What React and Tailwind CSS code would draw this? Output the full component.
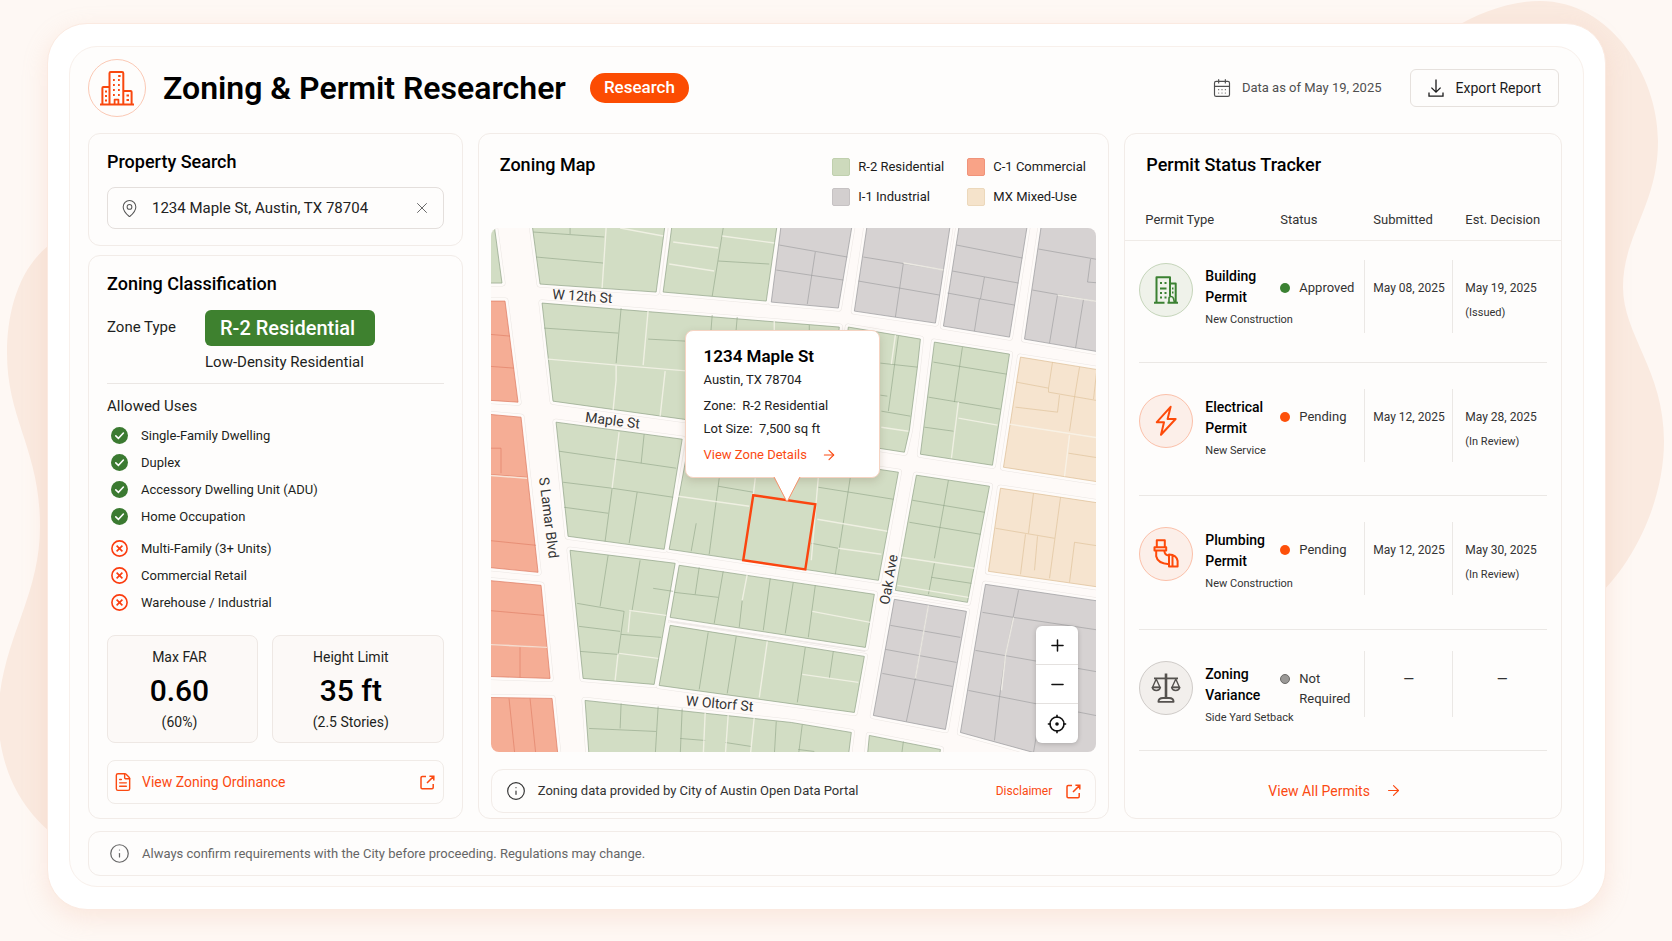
import React, { useState } from "react"
import { ArrowRight, CalendarDays, FileText, Info, MapPin, Minus, Plus, X } from "lucide-react"

const allowedUses = [
  "Single-Family Dwelling",
  "Duplex",
  "Accessory Dwelling Unit (ADU)",
  "Home Occupation",
]

const prohibitedUses = ["Multi-Family (3+ Units)", "Commercial Retail", "Warehouse / Industrial"]

const legend = [
  { label: "R-2 Residential", swatch: "bg-[#cddabc] border-[#c0d0ae]" },
  { label: "C-1 Commercial", swatch: "bg-[#f9a387] border-[#f0937a]" },
  { label: "I-1 Industrial", swatch: "bg-[#d3cfcf] border-[#c6c2c3]" },
  { label: "MX Mixed-Use", swatch: "bg-[#f5e3cb] border-[#ecd8bb]" },
]

const zones = {
  r2: { fill: "#d2ddc4", line: "#8fa287" },
  c1: { fill: "#f5ad95", line: "#dd7a62" },
  i1: { fill: "#d6d2d2", line: "#98989b" },
  mx: { fill: "#f6e4cf", line: "#dcbd94" },
}

// city blocks: outline, dark parcel lines, light alleys
const blocks = [
  { zone: "r2", shape: "M486 224H493L501 283H486Z" },
  {
    zone: "c1",
    shape: "M486 301H504L517 402L486 400Z",
    lines: "M486 334L509 336M486 366L513 368",
  },
  {
    zone: "c1",
    shape: "M486 414L520 417L537 572L486 567Z",
    lines: "M486 448H500V473M486 540L535 545M486 474L526 477",
    alleys: "M486 475L526 478",
  },
  {
    zone: "c1",
    shape: "M486 580L540 585L549 678L486 676Z",
    lines: "M519 647V677M486 644L546 647M486 610L543 615",
    alleys: "M486 644L546 647",
  },
  {
    zone: "c1",
    shape: "M486 697L551 698L557 756H486Z",
    lines: "M508 698L514 756M529 698L535 756",
  },
  {
    zone: "r2",
    shape: "M531 224H664L655 292L539 284Z",
    lines: "M532 232L603 237M535 257L602 263M569 228V234",
    alleys: "M605 228L601 288M619 228L662 236",
  },
  {
    zone: "r2",
    shape: "M671 224H776L765 301L662 292Z",
    lines: "M722 228L711 296M717 261L768 264",
    alleys: "M672 242L717 248M721 236L773 243M668 264L713 271",
  },
  {
    zone: "i1",
    shape: "M780 224H851L837 308L770 302Z",
    lines: "M778 245L846 257M814 252L806 304M775 270L842 280",
  },
  {
    zone: "i1",
    shape: "M866 224H949L934 323L853 311Z",
    lines: "M862 257L942 270M857 281L898 288L938 295M902 263L894 317",
    alleys: "M902 263L942 270",
  },
  {
    zone: "i1",
    shape: "M958 224H1026L1008 337L942 326Z",
    lines: "M955 245L1021 258M951 271L1017 283M946 293L1013 305M978 299L973 331M983 277L979 299",
  },
  {
    zone: "i1",
    shape: "M1040 224H1099V352L1023 339Z",
    lines: "M1037 249L1099 260M1031 290L1099 302M1082 299L1074 348M1089 259L1086 282L1099 283M1056 295L1048 343",
    alleys: "M1056 295L1099 302",
  },
  {
    zone: "r2",
    shape: "M541 303L838 327L826 440L682 419L552 401Z",
    lines: "M543 328L617 333M620 308L615 363M711 315L709 340M736 317L734 340M647 339L684 341M808 325V340",
    alleys: "M647 310L642 365M547 359L616 365L700 372M615 365L615 380L612 410M664 371L659 416M773 320V340",
  },
  {
    zone: "r2",
    shape: "M847 327L919 339L916 367L908 430L903 452L832 441Z",
    lines: "M897 336L887 411M879 363L916 367M879 395L886 396M880 411L909 416",
    alleys: "M894 335L890 364M880 427L907 431",
  },
  {
    zone: "r2",
    shape: "M933 342L1008 354L991 465L919 454Z",
    lines: "M961 347L953 402M932 362L1005 374M927 397L999 409M923 427L952 431",
    alleys: "M957 402L950 458M957 418L996 425",
  },
  {
    zone: "mx",
    shape: "M1019 357L1099 370V482L1002 467Z",
    lines: "M1015 382L1047 388V392L1099 401M1051 362L1047 388M1078 367L1073 397L1068 431M1014 407L1056 412L1058 395M1067 453L1099 458M1095 372L1092 399",
    alleys: "M1008 424L1099 438M1068 435L1063 476",
  },
  {
    zone: "r2",
    shape: "M555 422L681 439L663 549L567 536Z",
    lines: "M558 451L675 468M562 482L611 488L672 497M643 434L640 463M636 492L628 543M611 488L604 541M563 507L607 513",
    alleys: "M618 432L611 488",
  },
  {
    zone: "r2",
    shape: "M688 441L897 472L877 580L668 549Z",
    lines: "M718 478L708 554M717 486L752 492M817 487L892 499M849 477L834 574M810 543L837 548M695 523L690 551",
    alleys: "M677 496L748 506M754 478L752 495M817 477L810 560M816 519L886 531M837 548L880 554",
  },
  {
    zone: "r2",
    shape: "M915 475L988 486L966 602L894 590Z",
    lines: "M947 480L933 558M911 500L983 512M908 522L979 534M933 563L927 594M930 577L970 583",
    alleys: "M900 557L973 568M896 585L967 597",
  },
  {
    zone: "mx",
    shape: "M999 488L1099 503V587L987 571Z",
    lines: "M994 528L1053 538M1059 497L1048 578M1032 493L1027 533M1024 534L1019 574M1099 546L1073 542L1068 582M1036 536L1033 570",
  },
  {
    zone: "i1",
    shape: "M893 599L965 611L944 729L872 715Z",
    lines: "M889 625L959 637M884 649L955 662M881 673L951 686M927 605L914 678L905 721",
    alleys: "M927 605L914 678",
  },
  {
    zone: "i1",
    shape: "M984 584L1099 601V756H1046L1032 752L959 732Z",
    lines: "M981 612L1012 617L1099 630M974 650L1099 672M967 690L1099 716M1017 590L1004 655L998 697L993 740M1040 705L1032 752",
    alleys: "M1012 617L1004 655L1000 690",
  },
  {
    zone: "r2",
    shape: "M569 550L674 563L653 684L582 678Z",
    lines: "M607 555L599 606M639 560L631 610M576 603L623 611L617 654M578 626L619 631M579 651L617 654M620 634L660 637M652 588L672 591",
    alleys: "M618 653L657 658M617 653L614 680M628 610L665 615M629 611L627 632",
  },
  {
    zone: "r2",
    shape: "M678 565L873 594L864 647L669 617Z",
    lines: "M722 571L713 623M769 578L762 630M792 582L784 633M814 585L807 637M673 592L717 597M698 567L694 594M741 600L738 627",
    alleys: "M746 574L741 600M811 611L869 622",
  },
  {
    zone: "r2",
    shape: "M669 625L863 656L853 712L658 685Z",
    lines: "M707 632L698 689M735 636L726 693M804 647L796 702M832 651L828 678",
    alleys: "M766 641L758 697M801 674L857 682",
  },
  {
    zone: "r2",
    shape: "M584 700L790 722L850 732L847 756H588Z",
    lines: "M588 728L655 731M620 703L619 728M657 706L654 756M681 708L679 756M775 721L773 756M801 724L797 756M679 738L704 740M724 742L750 746M797 749L813 751",
    alleys: "M704 712L702 756M727 714L724 756M753 717L749 756",
  },
  { zone: "r2", shape: "M868 735L939 749L938 756H866Z", lines: "M902 741L900 756" },
]

const permits = [
  {
    name: "Building Permit",
    detail: "New Construction",
    icon: BuildingIcon,
    tone: "border-[#c5d5ba] bg-[#eff2ea] text-[#3b8132]",
    status: "Approved",
    dot: "bg-[#3b8132]",
    submitted: "May 08, 2025",
    decision: "May 19, 2025",
    note: "(Issued)",
    height: "h-[122px]",
    namePad: "pt-[20px]",
    pad: "pt-[19px]",
    rule: "h-[73px]",
  },
  {
    name: "Electrical Permit",
    detail: "New Service",
    icon: BoltIcon,
    tone: "border-[#fbc0a9] bg-[#fcefe9] text-[#fd4a0a]",
    status: "Pending",
    dot: "bg-[#fd500a]",
    submitted: "May 12, 2025",
    decision: "May 28, 2025",
    note: "(In Review)",
    height: "h-[133px]",
    namePad: "pt-[29px]",
    pad: "pt-[26px]",
    rule: "h-[73px]",
  },
  {
    name: "Plumbing Permit",
    detail: "New Construction",
    icon: PipeIcon,
    tone: "border-[#fbc0a9] bg-[#fcefe9] text-[#fd4a0a]",
    status: "Pending",
    dot: "bg-[#fd500a]",
    submitted: "May 12, 2025",
    decision: "May 30, 2025",
    note: "(In Review)",
    height: "h-[134px]",
    namePad: "pt-[29px]",
    pad: "pt-[26px]",
    rule: "h-[73px]",
  },
  {
    name: "Zoning Variance",
    detail: "Side Yard Setback",
    icon: ScalesIcon,
    tone: "border-[#cfcbc8] bg-[#f2efec] text-[#55524f]",
    status: "Not Required",
    dot: "border border-[#6c6a68] bg-[#9a9896]",
    height: "h-[121px]",
    namePad: "pt-[29px]",
    pad: "pt-[21px]",
    rule: "h-[66px]",
  },
]

function CityIcon() {
  return (
    <svg viewBox="0 0 34 35" className="h-[35px] w-[34px]" fill="none" stroke="currentColor" strokeWidth="2" strokeLinejoin="round">
      <path d="M0 33.6H34" />
      <path d="M9.5 33V2.2Q9.5 1 10.7 1H22Q23.3 1 23.3 2.2V33" />
      <path d="M9.5 16H3.4Q2.4 16 2.4 17V33M23.3 20H30.6Q31.6 20 31.6 21V33" />
      <path d="M14.6 33V28.6H18.4V33" strokeWidth="1.8" />
      <path
        d="M13 9H14.8M18 9H19.8M13 14H14.8M18 14H19.8M13 19H14.8M18 19H19.8M13 24H14.8M18 24H19.8M18.2 5H20.6M5 20.5H7M5 25H7M5 29.5H7M26.5 24.5H29M26.5 29H29"
        strokeWidth="2.2"
      />
    </svg>
  )
}

function BuildingIcon() {
  return (
    <svg viewBox="0 0 24 28" className="h-[28px] w-[24px]" fill="none" stroke="currentColor" strokeWidth="2" strokeLinejoin="round">
      <path d="M0 26.8H10.5M13.5 26.8H24" />
      <path d="M2.5 26.5V1.2H16V20M16 7.5H21.7V26.5" />
      <path d="M15 26.5V22.5Q15 20.5 17 20.5Q19 20.5 19.5 22.5L20.5 26.5" strokeWidth="1.6" />
      <path d="M6 7H8M10.5 7H12.5M6 12.5H12.5M6 17H8M10.5 17H12.5M6 21.5H8M10.5 21.5H12.5M18 12.5H19.5M18 16.5H19.5" />
    </svg>
  )
}

function BoltIcon() {
  return (
    <svg viewBox="0 0 22 32" className="h-[32px] w-[22px]" fill="none" stroke="currentColor" strokeWidth="2" strokeLinejoin="round">
      <path d="M15.6 1.8L1.8 17.2H9L6 29.8L20.6 14H12.6Z" />
    </svg>
  )
}

function PipeIcon() {
  return (
    <svg viewBox="0 0 26 29" className="h-[29px] w-[26px]" fill="none" stroke="currentColor" strokeWidth="2" strokeLinejoin="round">
      <path d="M3.8 7.5V1.2H11.8V7.5M1.5 8.2H13.2V11.4H1.5Z" />
      <path d="M3.2 12V17.2Q4.5 24.2 16 25.2M11.4 12Q11.6 16.2 16 16.6" />
      <path d="M16 15.5V27.5H24.6V22Q23.6 15.8 16 15.5ZM19.5 16.5V27" />
    </svg>
  )
}

function ScalesIcon() {
  return (
    <svg viewBox="0 0 30 30" className="h-[30px] w-[30px]" fill="none" stroke="currentColor" strokeWidth="1.8" strokeLinejoin="round">
      <path d="M15 .5V24.5" strokeWidth="2.6" />
      <path d="M3 5.4H27" />
      <path d="M5.2 6L1.6 14.2H9L5.2 6M24.8 6L21 14.2H28.4L24.8 6" strokeWidth="1.4" />
      <path d="M1.2 14.4Q1.8 17.4 5.3 17.4Q8.8 17.4 9.4 14.4ZM20.6 14.4Q21.2 17.4 24.7 17.4Q28.2 17.4 28.8 14.4Z" strokeWidth="1.5" />
      <path d="M7.4 28.8Q7.4 25 12 25H18Q22.6 25 22.6 28.8Z" />
    </svg>
  )
}

function ExternalIcon() {
  return (
    <svg viewBox="0 0 15 15" className="size-[15px] shrink-0" fill="none" stroke="currentColor" strokeWidth="1.5">
      <path d="M6 1.6H2.2Q1 1.6 1 2.8V12.6Q1 13.8 2.2 13.8H12Q13.2 13.8 13.2 12.6V9M9.4 1.2H13.8V5.6M13.6 1.4L7 8" />
    </svg>
  )
}

function DownloadIcon() {
  return (
    <svg viewBox="0 0 16 19" className="h-[19px] w-[16px]" fill="none" stroke="currentColor" strokeWidth="1.3">
      <path d="M8 .5V13M3.4 8.6L8 13.2L12.6 8.6M1 13.5V17.2H15V13.5" />
    </svg>
  )
}

function TargetIcon() {
  return (
    <svg viewBox="0 0 20 20" className="size-5" fill="none" stroke="currentColor" strokeWidth="1.6">
      <circle cx="10" cy="10" r="7" />
      <circle cx="10" cy="10" r="1.8" fill="currentColor" stroke="none" />
      <path d="M10 .8V4M10 16V19.2M.8 10H4M16 10H19.2" />
    </svg>
  )
}

function CheckBadge() {
  return (
    <svg viewBox="0 0 17 17" className="size-[17px]" fill="none">
      <circle cx="8.5" cy="8.5" r="8.5" fill="#3b7a31" />
      <path d="M4.8 8.8L7.4 11.3L12.4 6" stroke="#fff" strokeWidth="1.6" strokeLinecap="round" />
    </svg>
  )
}

function CrossBadge() {
  return (
    <svg viewBox="0 0 17 17" className="size-[17px]" fill="none" stroke="#fb3d10" strokeWidth="1.6">
      <circle cx="8.5" cy="8.5" r="7.6" />
      <path d="M5.6 5.6L11.4 11.4M11.4 5.6L5.6 11.4" />
    </svg>
  )
}

function Backdrop() {
  return (
    <>
      <svg viewBox="0 0 60 600" className="absolute top-[240px] left-0 h-[600px] w-[60px]">
        <path d="M60 -2C20 20 7 70 7 113C7 180 40 210 40 286C40 360 0 400 -2 478C0 530 20 570 60 600Z" fill="#faeae0" />
      </svg>
      <svg viewBox="0 0 232 610" className="absolute top-0 right-0 h-[610px] w-[232px]">
        <path d="M10 30C40 12 70 1 100 1C170 1 218 75 218 141C218 205 183 235 183 287C183 335 224 370 224 441C224 500 195 560 160 594L120 610Z" fill="#faeae0" />
      </svg>
    </>
  )
}

function Header() {
  return (
    <header className="flex items-center">
      <div className="flex size-[58px] items-center justify-center rounded-full border border-[#fbc9b5] text-[#f9480f]">
        <CityIcon />
      </div>
      <h1 className="ml-[17px] text-[32px] leading-[40px] font-semibold text-black">Zoning &amp; Permit Researcher</h1>
      <span className="ml-6 flex h-[30px] items-center rounded-full bg-[#fc4c02] px-[14px] text-[17px] font-medium text-white">
        Research
      </span>
      <div className="ml-auto flex items-center gap-[10px] text-[13px] text-[#4f4f4f]">
        <CalendarDays size={20} strokeWidth={1.4} />
        Data as of May 19, 2025
      </div>
      <button className="mr-[3px] ml-[28px] flex h-[38px] items-center gap-3 rounded-md border border-[#e6e1dd] bg-[#fefdfc] px-[17px] text-[14px] text-[#1b1b1b]">
        <DownloadIcon />
        Export Report
      </button>
    </header>
  )
}

function PropertySearch() {
  const [query, setQuery] = useState("1234 Maple St, Austin, TX 78704")

  return (
    <section className="rounded-xl border border-[#f2ece8] px-[18px] pt-4 pb-4">
      <label htmlFor="property" className="block text-[18px] leading-6 font-medium text-black">
        Property Search
      </label>
      <div className="mt-[13px] flex h-[42px] items-center rounded-lg border border-[#e4dfdc] bg-[#fefdfc] px-3">
        <MapPin size={19} strokeWidth={1.3} className="shrink-0 text-[#555]" />
        <input
          id="property"
          type="text"
          value={query}
          onChange={(e) => setQuery(e.target.value)}
          className="ml-[13px] min-w-0 flex-1 bg-transparent text-[15px] text-[#222] outline-none"
        />
        <button aria-label="Clear search" onClick={() => setQuery("")} className="text-[#666]">
          <X size={18} strokeWidth={1.3} />
        </button>
      </div>
    </section>
  )
}

function ZoningClassification() {
  return (
    <section className="flex flex-1 flex-col rounded-xl border border-[#f2ece8] px-[18px] pt-4 pb-[14px] text-[#1d1f21]">
      <h2 className="text-[18px] leading-6 font-medium text-black">Zoning Classification</h2>
      <div className="mt-[14px] flex">
        <span className="w-[98px] text-[15px] leading-[34px]">Zone Type</span>
        <div>
          <div className="flex h-9 items-center rounded-md bg-[#3e812f] px-[15px] pr-[20px] text-[20px] font-medium text-white">
            R-2 Residential
          </div>
          <p className="mt-[6px] text-[15px] leading-5">Low-Density Residential</p>
        </div>
      </div>
      <hr className="mt-[11px] border-[#ebe7e4]" />

      <h3 className="mt-3 text-[15px] leading-5">Allowed Uses</h3>
      <ul className="mt-[6px]">
        {allowedUses.map((use) => (
          <li key={use} className="flex h-[27px] items-center gap-[13px] pl-1 text-[13px]">
            <CheckBadge />
            {use}
          </li>
        ))}
      </ul>
      <ul className="mt-[5px]">
        {prohibitedUses.map((use) => (
          <li key={use} className="flex h-[27px] items-center gap-[13px] pl-1 text-[13px]">
            <CrossBadge />
            {use}
          </li>
        ))}
      </ul>

      <div className="mt-[19px] mb-[17px] grid grid-cols-[151fr_172fr] gap-[14px] text-center">
        <div className="rounded-lg border border-[#eee8e4] bg-[#fcf9f7] pt-[11px] pr-[6px] pb-[10px]">
          <p className="text-[14px] leading-5">Max FAR</p>
          <p className="mt-[6px] text-[30px] leading-9 font-medium text-black">0.60</p>
          <p className="mt-[3px] text-[14px] leading-5">(60%)</p>
        </div>
        <div className="rounded-lg border border-[#eee8e4] bg-[#fcf9f7] pt-[11px] pr-[14px] pb-[10px]">
          <p className="text-[14px] leading-5">Height Limit</p>
          <p className="mt-[6px] text-[30px] leading-9 font-medium text-black">35 ft</p>
          <p className="mt-[3px] text-[14px] leading-5">(2.5 Stories)</p>
        </div>
      </div>

      <a href="#ordinance" className="mt-auto flex h-11 items-center rounded-lg border border-[#f0ebe7] pr-2 pl-[5px] text-[14px] text-[#fb4a12]">
        <FileText size={20} strokeWidth={1.7} />
        <span className="ml-[9px] flex-1">View Zoning Ordinance</span>
        <ExternalIcon />
      </a>
    </section>
  )
}

function StreetMap() {
  return (
    <svg viewBox="490 228 605 524" className="block w-full rounded-lg bg-[#fefaf8]" role="img" aria-label="Zoning map of the area around 1234 Maple St">
      {blocks.map((b) => (
        <path key={b.shape} d={b.shape} fill="none" stroke="#ece7e4" strokeWidth="7" strokeLinejoin="round" />
      ))}
      {blocks.map((b) => (
        <path key={b.shape} d={b.shape} fill="none" stroke="#fefbf9" strokeWidth="6" strokeLinejoin="round" />
      ))}
      {blocks.map((b) => (
        <g key={b.shape} fill="none">
          <path d={b.shape} fill={zones[b.zone].fill} stroke={zones[b.zone].line} strokeWidth="0.7" />
          {b.lines && <path d={b.lines} stroke={zones[b.zone].line} strokeWidth="0.6" />}
          {b.alleys && <path d={b.alleys} stroke="#f8f5ec" strokeWidth="1.4" strokeOpacity="0.75" />}
        </g>
      ))}
      <path d="M669 621L864 651" stroke="#e6e2df" strokeWidth="0.8" />
      <path d="M752 495L814 504L804 569L742 560Z" fill="#d2ddc4" stroke="#fb4510" strokeWidth="2.4" />
      <g fill="#333" fontSize="14" textAnchor="middle">
        <text transform="translate(581 301) rotate(4)">W 12th St</text>
        <text transform="translate(611 425) rotate(7)">Maple St</text>
        <text transform="translate(718 708) rotate(5)">W Oltorf St</text>
        <text transform="translate(543 518) rotate(83)">S Lamar Blvd</text>
        <text transform="translate(892 580) rotate(-80)">Oak Ave</text>
      </g>
    </svg>
  )
}

function LotCallout() {
  return (
    <div className="absolute top-[19.5%] left-[32%] w-[195px] rounded-lg border border-[#f6d3c2] bg-white pt-[13px] pb-[11px] pl-[18px] text-[13px] leading-[23px] text-[#222] shadow-[0_3px_8px_rgba(90,60,40,0.18)]">
      <p className="text-[17px] leading-6 font-semibold text-black">1234 Maple St</p>
      <p>Austin, TX 78704</p>
      <p className="mt-[3px]">Zone:&nbsp; R-2 Residential</p>
      <p>Lot Size:&nbsp; 7,500 sq ft</p>
      <a href="#zone" className="mt-[3px] flex items-center gap-[14px] text-[#fb4a12]">
        View Zone Details
        <ArrowRight size={16} strokeWidth={1.6} />
      </a>
      <svg viewBox="0 0 28 28" className="absolute top-full left-[87px] -mt-px h-7 w-7" fill="none">
        <path d="M1 0L14 26L27 0Z" fill="#fff" />
        <path d="M1 1L14 26L27 1" stroke="#f8926d" />
      </svg>
    </div>
  )
}

function ZoningMap() {
  return (
    <section className="flex flex-col rounded-xl border border-[#f2ece8] px-3 pb-[5px]">
      <div className="flex h-[94px] items-start justify-between pr-1 pl-[9px]">
        <h2 className="pt-[19px] text-[18px] leading-6 font-medium text-black">Zoning Map</h2>
        <ul className="mt-6 grid grid-cols-[135px_125px] gap-y-3 text-[13px] leading-[18px] text-[#1b1b1b]">
          {legend.map((item) => (
            <li key={item.label} className="flex gap-2">
              <span className={`size-[18px] rounded-xs border ${item.swatch}`} />
              {item.label}
            </li>
          ))}
        </ul>
      </div>
      <div className="relative mb-4">
        <StreetMap />
        <LotCallout />
        <div className="absolute right-[18px] bottom-[9px] w-[42px] divide-y divide-[#e4e1df] rounded-md bg-white text-[#111] shadow-[0_1px_5px_rgba(0,0,0,0.2)]">
          <button aria-label="Zoom in" className="flex h-[39px] w-full items-center justify-center">
            <Plus size={19} strokeWidth={1.9} />
          </button>
          <button aria-label="Zoom out" className="flex h-[39px] w-full items-center justify-center">
            <Minus size={19} strokeWidth={1.9} />
          </button>
          <button aria-label="Center on property" className="flex h-[39px] w-full items-center justify-center">
            <TargetIcon />
          </button>
        </div>
      </div>
      <div className="mt-auto flex h-11 items-center rounded-xl border border-[#f2ece8] pr-[14px] pl-[14px] text-[13px] text-[#333]">
        <Info size={20} strokeWidth={1.4} />
        <span className="ml-[12px] flex-1">Zoning data provided by City of Austin Open Data Portal</span>
        <a href="#disclaimer" className="flex items-center gap-[14px] text-[12px] text-[#fb4a12]">
          Disclaimer
          <ExternalIcon />
        </a>
      </div>
    </section>
  )
}

function PermitRow({ permit }) {
  const Icon = permit.icon

  return (
    <tr className="align-top">
      <td className="p-0 pl-[14px]">
        <div className={`flex border-b border-[#ebe8e5] ${permit.height} ${permit.namePad}`}>
          <span className={`mt-[2px] flex size-[54px] shrink-0 items-center justify-center rounded-full border ${permit.tone}`}>
            <Icon />
          </span>
          <div className="mt-[5px] ml-3 w-[70px]">
            <p className="text-[14px] leading-[21px] font-medium text-black">{permit.name}</p>
            <p className="mt-[2px] text-[11px] leading-5 whitespace-nowrap text-[#333]">{permit.detail}</p>
          </div>
        </div>
      </td>
      <td className="p-0">
        <div className={`border-b border-[#ebe8e5] ${permit.height} ${permit.pad}`}>
          <div className="flex gap-[9px] pt-[18px] text-[13px] leading-5 text-[#333]">
            <span className={`mt-[5px] size-[10px] shrink-0 rounded-full ${permit.dot}`} />
            {permit.status}
          </div>
        </div>
      </td>
      <td className="p-0">
        <div className={`border-b border-[#ebe8e5] ${permit.height} ${permit.pad}`}>
          <div className={`border-l border-[#ebe8e5] pt-[18px] pl-2 text-[12px] leading-5 whitespace-nowrap text-[#333] ${permit.rule}`}>
            {permit.submitted || <p className="pr-2 text-center text-[14px]">—</p>}
          </div>
        </div>
      </td>
      <td className="p-0 pr-[14px]">
        <div className={`border-b border-[#ebe8e5] ${permit.height} ${permit.pad}`}>
          <div className={`border-l border-[#ebe8e5] pt-[18px] pl-3 text-[12px] leading-5 whitespace-nowrap text-[#333] ${permit.rule}`}>
            {permit.decision || <p className="pr-2 text-center text-[14px]">—</p>}
            {permit.note && <p className="mt-[5px] text-[11px]">{permit.note}</p>}
          </div>
        </div>
      </td>
    </tr>
  )
}

function PermitTracker() {
  return (
    <section className="flex flex-col rounded-xl border border-[#f2ece8] pt-[19px]">
      <h2 className="pl-[21px] text-[18px] leading-6 font-medium text-black">Permit Status Tracker</h2>
      <table className="mt-[22px] w-full table-fixed border-collapse text-left">
        <colgroup>
          <col className="w-[155px]" />
          <col className="w-[84px]" />
          <col className="w-[88px]" />
          <col />
        </colgroup>
        <thead>
          <tr className="h-[41px] border-b border-[#efebe7] text-[13px] text-[#333]">
            <th className="p-0 pl-5 font-normal">Permit Type</th>
            <th className="p-0 font-normal">Status</th>
            <th className="p-0 pl-[9px] font-normal">Submitted</th>
            <th className="p-0 pl-[13px] font-normal">Est. Decision</th>
          </tr>
        </thead>
        <tbody>
          {permits.map((permit) => (
            <PermitRow key={permit.name} permit={permit} />
          ))}
        </tbody>
      </table>
      <a href="#permits" className="mx-auto mt-[30px] mb-4 flex items-center gap-[15px] pr-4 text-[14px] leading-5 text-[#fb4a12]">
        View All Permits
        <ArrowRight size={17} strokeWidth={1.6} />
      </a>
    </section>
  )
}

function App() {
  return (
    <div className="relative min-h-screen overflow-hidden bg-[#fef8f4] pt-[23px] pr-[66px] pb-8 pl-[47px] font-['Roboto',sans-serif]">
      <Backdrop />
      <div className="relative rounded-[40px] border border-[#fbeae1] bg-white px-[21px] py-[22px] shadow-[0_8px_24px_rgba(240,180,150,0.25)]">
        <main className="rounded-[28px] border border-[#f8f0eb] bg-[#fefdfc] pt-[12px] pr-[21px] pb-[10px] pl-[18px]">
          <Header />
          <div className="mt-4 grid grid-cols-[375fr_632fr_438fr] gap-[15px]">
            <div className="flex flex-col gap-[9px]">
              <PropertySearch />
              <ZoningClassification />
            </div>
            <ZoningMap />
            <PermitTracker />
          </div>
          <footer className="mt-3 flex h-[45px] items-center gap-[12px] rounded-xl border border-[#f2ece8] pl-5 text-[13px] text-[#666]">
            <Info size={21} strokeWidth={1.4} />
            Always confirm requirements with the City before proceeding. Regulations may change.
          </footer>
        </main>
      </div>
    </div>
  )
}

export default App
